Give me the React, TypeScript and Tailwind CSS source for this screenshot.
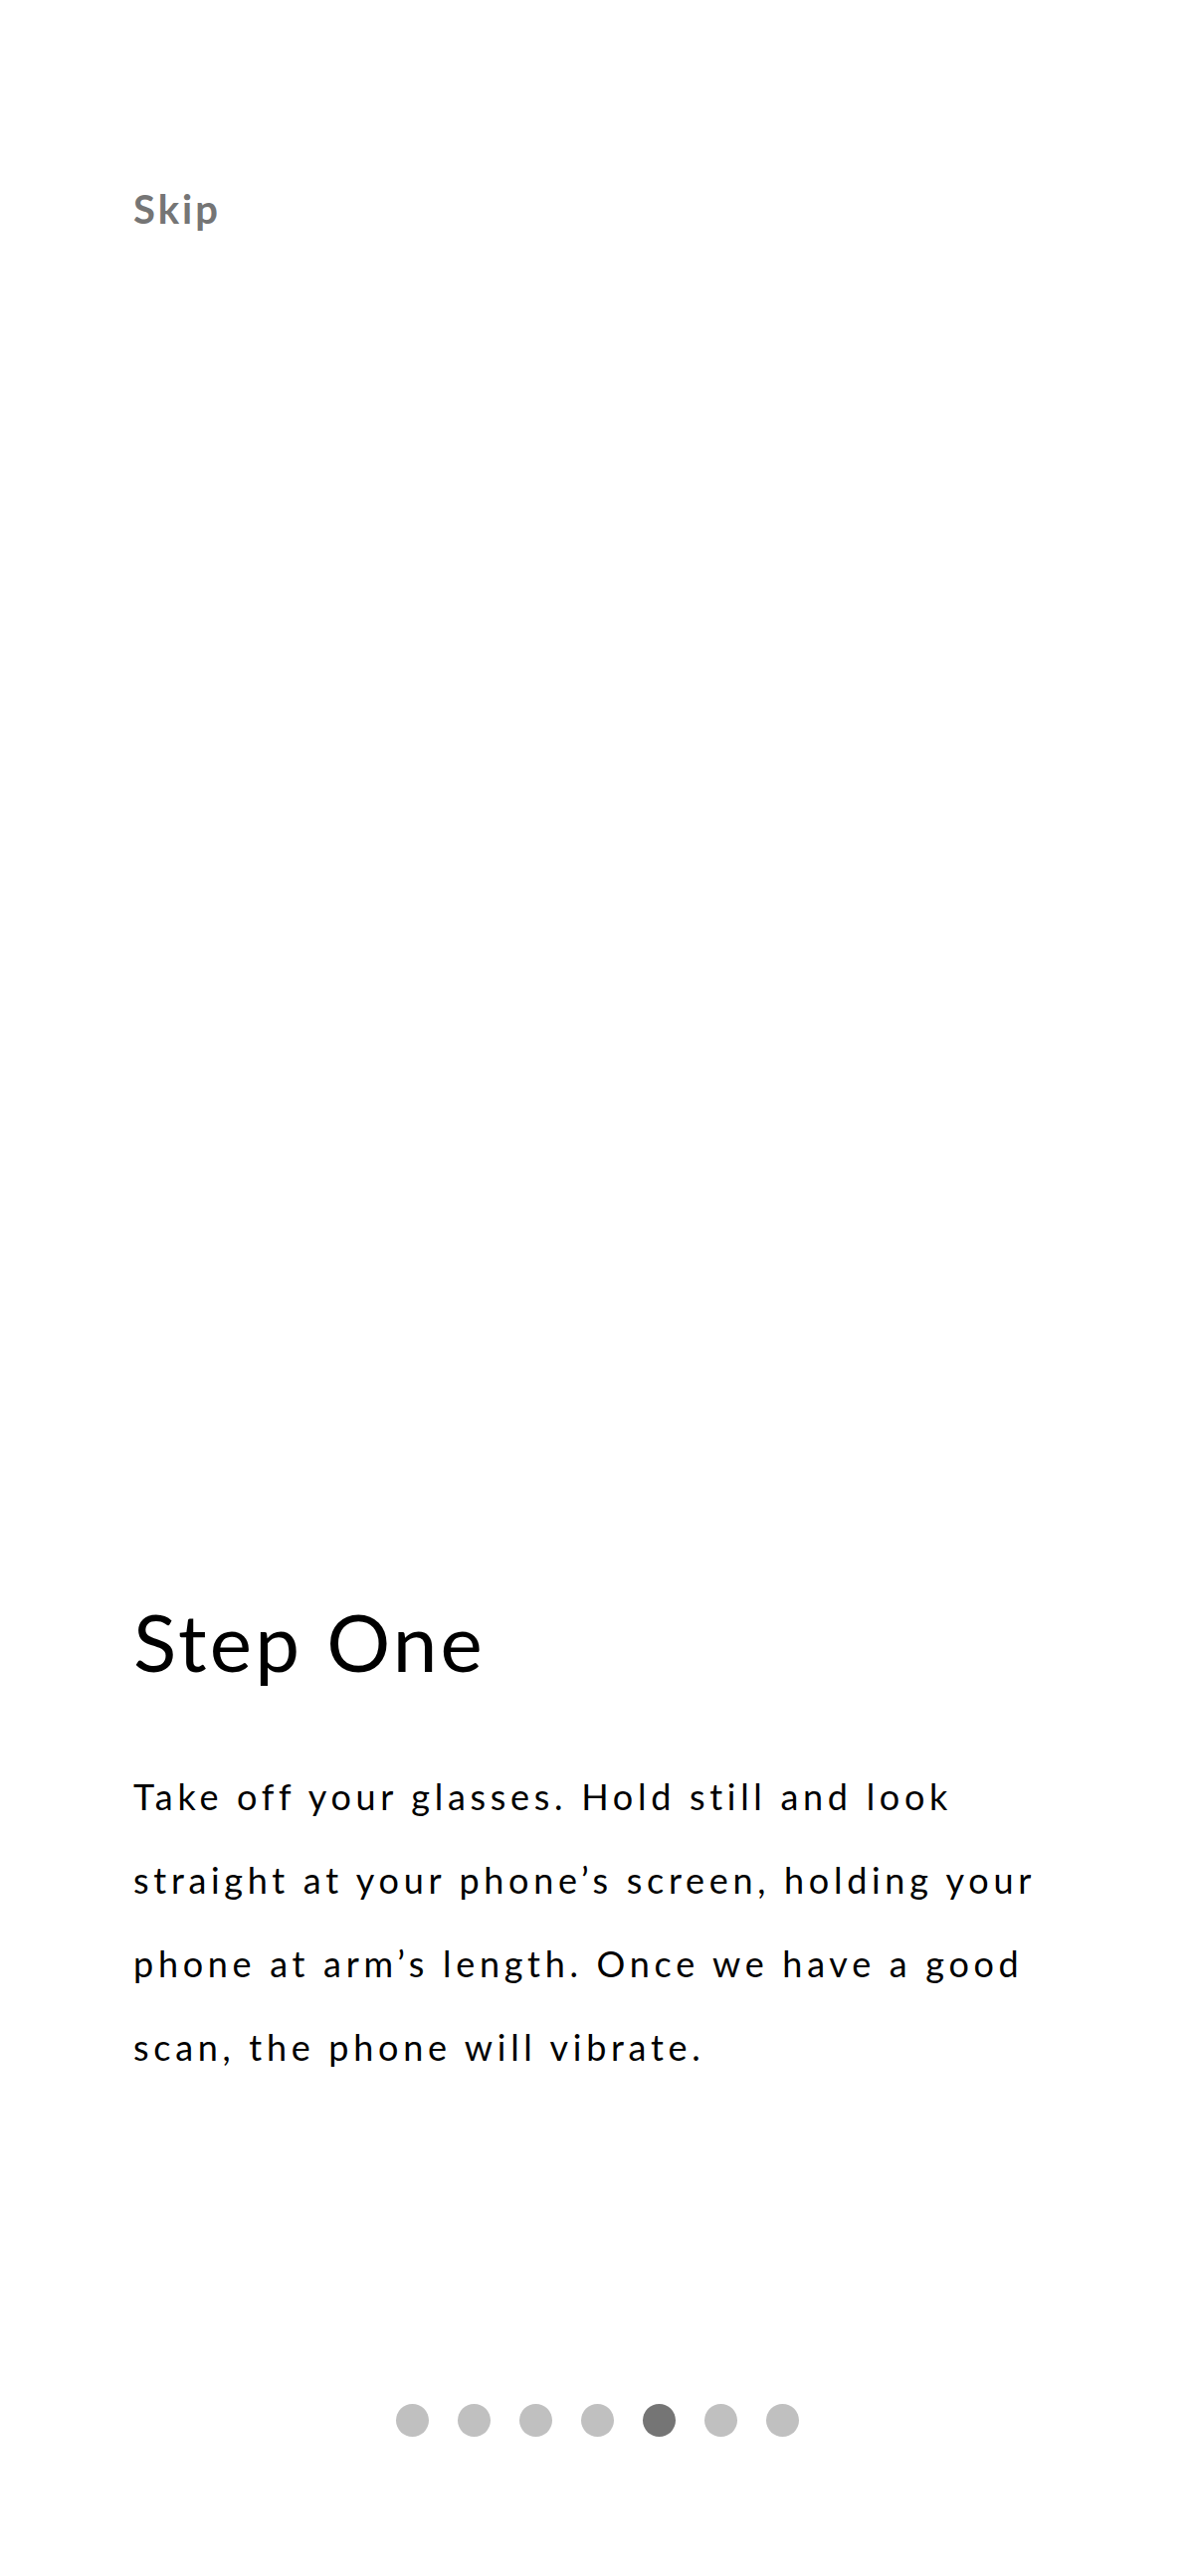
import React from "react";

const lines = [
  "Take off your glasses. Hold still and look",
  "straight at your phone’s screen, holding your",
  "phone at arm’s length. Once we have a good",
  "scan, the phone will vibrate.",
];

export default function App() {
  return (
    <div className="w-[1200px] h-[2590px] bg-white flex flex-col pl-[134px] overflow-hidden">
      <div
        className="mt-[190px] text-[40px] leading-none font-bold tracking-[3px] text-[#757575]"
        style={{ fontFamily: "Lato, sans-serif" }}
      >
        Skip
      </div>
      <h1
        className="mt-[1380px] text-[80px] leading-none font-normal tracking-[3.3px] text-black"
        style={{ fontFamily: "Lato, sans-serif" }}
      >
        Step One
      </h1>
      <div
        className="mt-[74px] text-[36px] leading-[84px] tracking-[4.7px] text-black"
        style={{ fontFamily: "Lato, sans-serif" }}
      >
        {lines.map((l) => (
          <div key={l} className="whitespace-nowrap">{l}</div>
        ))}
      </div>
      <div className="mt-[317px] -ml-[134px] flex justify-center gap-[29px]">
        {[0, 1, 2, 3, 4, 5, 6].map((i) => (
          <div
            key={i}
            className={i === 4 ? "w-[33px] h-[33px] rounded-full bg-[#757575]" : "w-[33px] h-[33px] rounded-full bg-[#c0c0c0]"}
          />
        ))}
      </div>
    </div>
  );
}
